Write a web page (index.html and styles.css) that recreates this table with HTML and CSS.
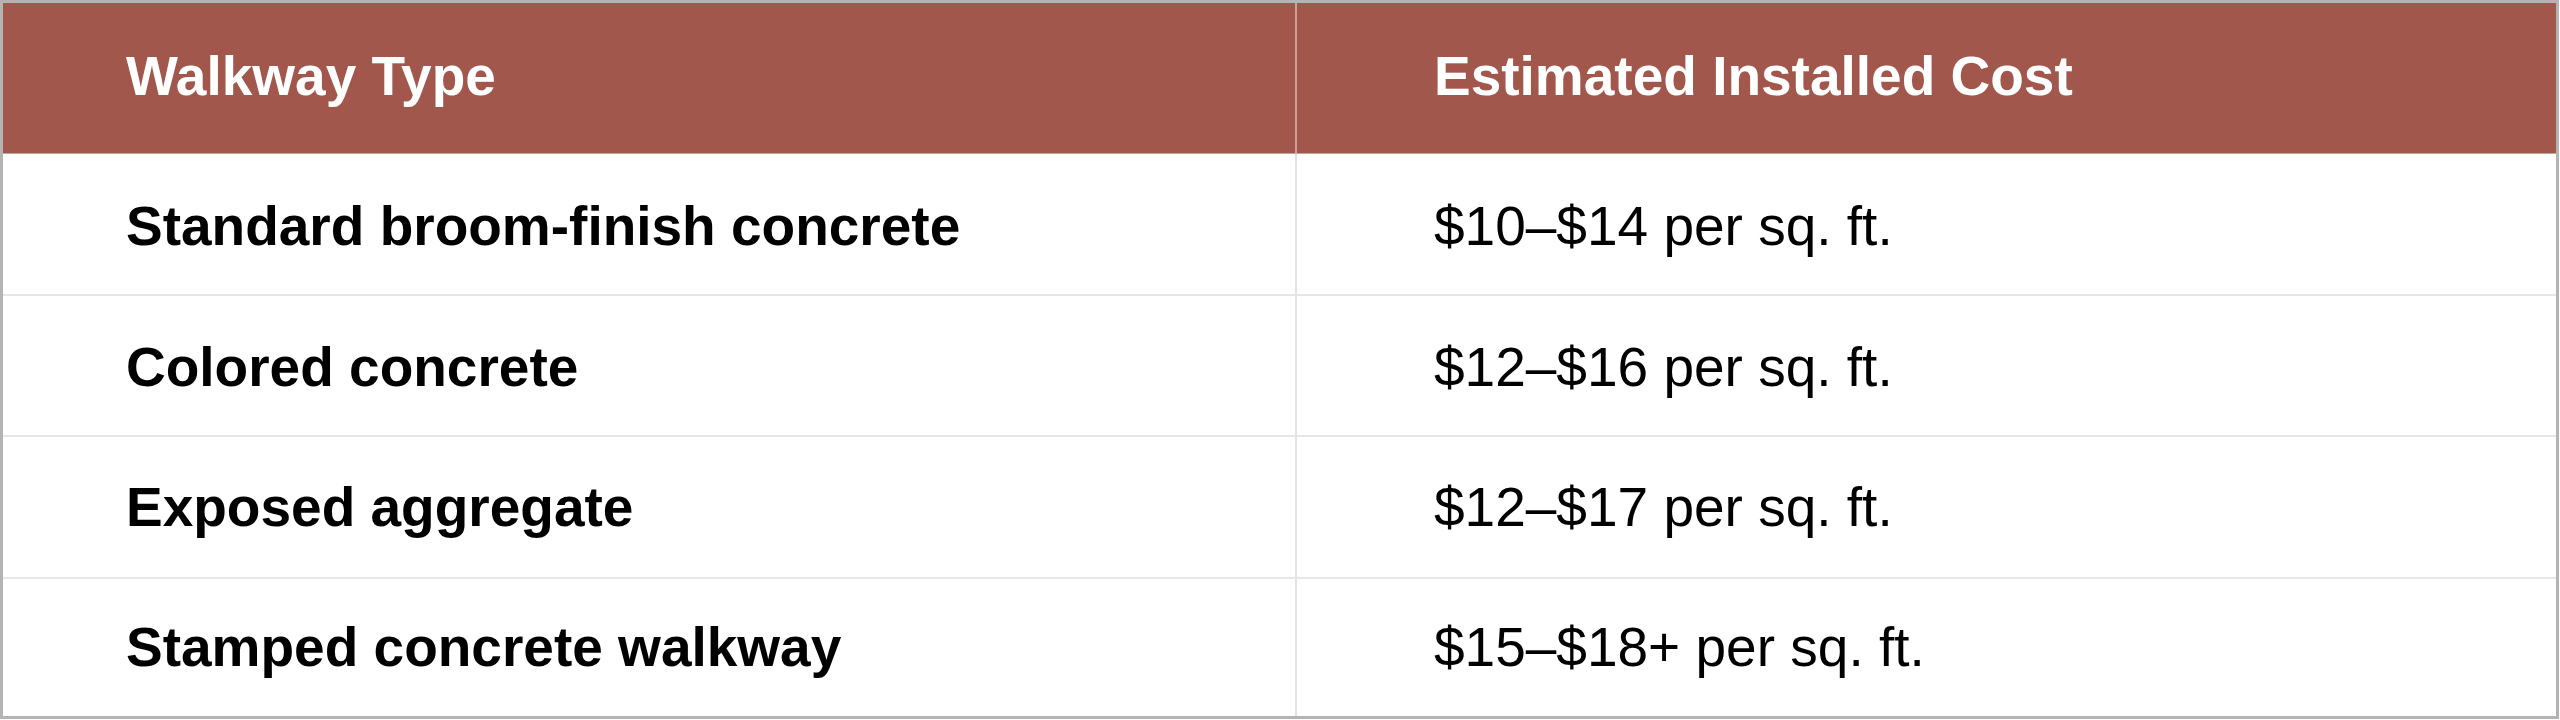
FILE: index.html
```html
<!DOCTYPE html>
<html lang="en">
<head>
<meta charset="utf-8">
<title>Walkway Costs</title>
<link rel="stylesheet" href="styles.css">
</head>
<body>
<table class="cost-table">
  <colgroup>
    <col class="c-type">
    <col class="c-cost">
  </colgroup>
  <thead>
    <tr class="head-row">
      <th class="col-type">Walkway Type</th>
      <th class="col-cost">Estimated Installed Cost</th>
    </tr>
  </thead>
  <tbody>
    <tr class="row r1">
      <td class="col-type">Standard broom-finish concrete</td>
      <td class="col-cost">$10–$14 per sq. ft.</td>
    </tr>
    <tr class="row r2">
      <td class="col-type">Colored concrete</td>
      <td class="col-cost">$12–$16 per sq. ft.</td>
    </tr>
    <tr class="row r3">
      <td class="col-type">Exposed aggregate</td>
      <td class="col-cost">$12–$17 per sq. ft.</td>
    </tr>
    <tr class="row r4">
      <td class="col-type">Stamped concrete walkway</td>
      <td class="col-cost">$15–$18+ per sq. ft.</td>
    </tr>
  </tbody>
</table>
</body>
</html>
```
FILE: styles.css
```css
html, body {
  margin: 0;
  padding: 0;
  background: #ffffff;
}

.cost-table {
  width: 2559px;
  height: 719px;
  border-collapse: separate;
  border-spacing: 0;
  border: 3px solid #b4b4b4;
  table-layout: fixed;
  font-family: "Liberation Sans", Arial, Helvetica, sans-serif;
  font-size: 55px;
  color: #000000;
  box-sizing: border-box;
}

.c-type { width: 1294px; }
.c-cost { width: auto; }

.cost-table th,
.cost-table td {
  box-sizing: border-box;
  text-align: left;
  vertical-align: middle;
  padding: 0;
  line-height: 1.15;
}

.cost-table .col-type {
  padding-left: 123px;
  border-right: 2px solid #e3e3e3;
  font-weight: bold;
}

.cost-table .col-cost {
  padding-left: 137px;
  font-weight: normal;
}

.head-row {
  height: 151px;
  background: #a1574b;
}

.cost-table .head-row th {
  color: #ffffff;
  font-weight: bold;
  padding-bottom: 2px;
  border-bottom: 1px solid #c9a29b;
}

.cost-table .head-row th.col-type {
  border-right: 2px solid #c9a29b;
}

.row td {
  border-bottom: 2px solid #e6e6e6;
}

.row.r1 { height: 142px; }
.row.r1 td { padding-top: 6px; }
.row.r2 { height: 141px; }
.row.r2 td { padding-top: 4px; }
.row.r3 { height: 142px; }
.row.r3 td { padding-top: 2px; }
.row.r4 { height: 137px; }
.row.r4 td { border-bottom: none; }
```
